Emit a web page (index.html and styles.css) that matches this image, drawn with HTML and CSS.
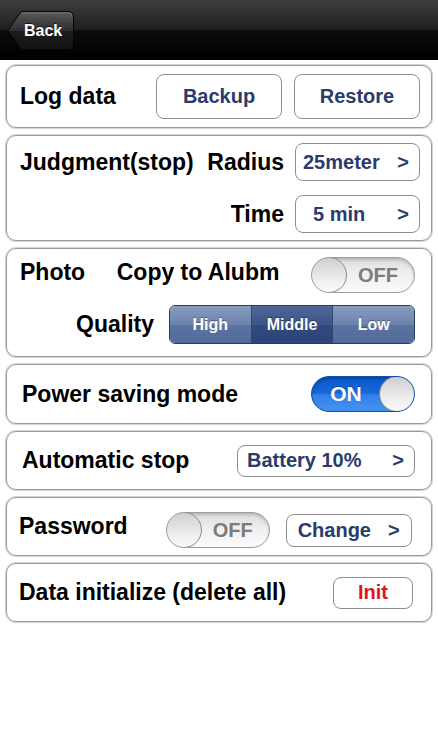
FILE: index.html
```html
<!DOCTYPE html>
<html lang="en">
<head>
  <meta charset="UTF-8">
  <meta name="viewport" content="width=device-width, initial-scale=1.0">
  <title>Settings</title>
  <link rel="stylesheet" href="styles.css">
</head>
<body>
  <header class="navbar">
    <button type="button" class="back-btn">
      <svg class="back-shape" viewBox="0 0 67 39" width="67" height="39">
        <defs>
          <linearGradient id="backFill" x1="0" y1="0" x2="0" y2="1">
            <stop offset="0" stop-color="#5a5a5a"/>
            <stop offset="0.5" stop-color="#2e2e2e"/>
            <stop offset="0.52" stop-color="#1c1c1c"/>
            <stop offset="1" stop-color="#141414"/>
          </linearGradient>
        </defs>
        <path d="M1 19.5 L13 2 Q14 0.5 16 0.5 L61 0.5 Q66.5 0.5 66.5 6 L66.5 33 Q66.5 38.5 61 38.5 L16 38.5 Q14 38.5 13 37 Z" fill="url(#backFill)" stroke="#050505" stroke-width="1"/>
        <path d="M14.5 2 L61 2 Q65 2 65 6" fill="none" stroke="rgba(255,255,255,0.18)" stroke-width="1"/>
      </svg>
      <span class="back-text">Back</span>
    </button>
  </header>

  <main class="settings">
    <!-- log data -->
    <section class="card card-log">
      <span class="label">Log data</span>
      <div class="btn-pair">
        <button type="button" class="btn btn-big">Backup</button>
        <button type="button" class="btn btn-big">Restore</button>
      </div>
    </section>

    <!-- judgment -->
    <section class="card card-judgment">
      <div class="row">
        <span class="label">Judgment(stop)</span>
        <span class="label label-push">Radius</span>
        <button type="button" class="btn btn-select"><span>25meter</span><span class="arrow">&gt;</span></button>
      </div>
      <div class="row row-end">
        <span class="label">Time</span>
        <button type="button" class="btn btn-select btn-time"><span>5 min</span><span class="arrow">&gt;</span></button>
      </div>
    </section>

    <!-- photo -->
    <section class="card card-photo">
      <div class="row row-spread">
        <span class="label">Photo</span>
        <span class="label">Copy to Alubm</span>
        <div class="switch switch-off"><span class="knob"></span><span class="switch-text">OFF</span></div>
      </div>
      <div class="row row-end">
        <span class="label">Quality</span>
        <div class="segmented">
          <span class="seg">High</span>
          <span class="seg seg-active">Middle</span>
          <span class="seg">Low</span>
        </div>
      </div>
    </section>

    <!-- power saving -->
    <section class="card card-power">
      <span class="label">Power saving mode</span>
      <div class="switch switch-on"><span class="switch-text">ON</span><span class="knob"></span></div>
    </section>

    <!-- automatic stop -->
    <section class="card card-auto">
      <span class="label">Automatic stop</span>
      <button type="button" class="btn btn-select btn-battery"><span>Battery 10%</span><span class="arrow">&gt;</span></button>
    </section>

    <!-- password -->
    <section class="card card-password">
      <span class="label">Password</span>
      <div class="switch switch-off"><span class="knob"></span><span class="switch-text">OFF</span></div>
      <button type="button" class="btn btn-select btn-change"><span>Change</span><span class="arrow">&gt;</span></button>
    </section>

    <!-- init -->
    <section class="card card-init">
      <span class="label">Data initialize (delete all)</span>
      <button type="button" class="btn btn-init">Init</button>
    </section>
  </main>
</body>
</html>
```

FILE: styles.css
```css
body {
  margin: 0;
  background-color: #fff;
  font-family: "Liberation Sans", Arial, Helvetica, sans-serif;
  font-weight: bold;
  color: #000;
}

button {
  font-family: inherit;
  font-weight: bold;
  margin: 0;
  cursor: pointer;
}

.navbar {
  height: 60px;
  box-sizing: border-box;
  padding: 11px 0 0 7px;
  background: linear-gradient(#3d3d3d 0%, #1e1e1e 50%, #0b0b0b 51%, #000 100%);
}

.back-btn {
  position: relative;
  width: 67px;
  height: 39px;
  padding: 0 0 0 17px;
  border: none;
  background: none;
  color: #fff;
  font-size: 16px;
  display: flex;
  align-items: center;
}

.back-shape {
  position: absolute;
  left: 0;
  top: 0;
}

.back-text {
  position: relative;
  text-shadow: 0 -1px 0 rgba(0, 0, 0, 0.6);
}

.settings {
  padding: 5px 6px;
  display: flex;
  flex-direction: column;
  gap: 7px;
}

.card {
  box-sizing: border-box;
  border: 1px solid #9a9a9a;
  box-shadow: 0 0 0 1px #d6d6d6;
  border-radius: 10px;
  padding: 0 11px 0 13px;
  display: flex;
  align-items: center;
  justify-content: space-between;
}

.label {
  font-size: 23px;
  white-space: nowrap;
}

.card-log {
  height: 63px;
}

.btn-pair {
  display: flex;
  gap: 12px;
}

.btn {
  box-sizing: border-box;
  background: #fff;
  border: 1px solid #8e8e8e;
  border-radius: 8px;
  color: #2a3b6c;
  font-size: 20px;
  padding: 0;
}

.btn-big {
  width: 126px;
  height: 45px;
}

.card-judgment {
  height: 106px;
  flex-direction: column;
  align-items: stretch;
  justify-content: flex-start;
  padding-top: 7px;
  padding-bottom: 7px;
  gap: 14px;
}

.row {
  display: flex;
  align-items: center;
}

.row-end {
  justify-content: flex-end;
  gap: 11px;
}

.row-spread {
  justify-content: space-between;
}

.label-push {
  margin-left: auto;
  margin-right: 11px;
}

.btn-select {
  width: 125px;
  height: 38px;
  display: flex;
  align-items: center;
  justify-content: space-between;
  padding: 0 10px 0 7px;
}

.btn-time {
  padding-left: 17px;
}

.arrow {
  font-size: 20px;
}

.card-photo {
  height: 109px;
  flex-direction: column;
  align-items: stretch;
  justify-content: flex-start;
  padding-top: 8px;
  padding-right: 16px;
  gap: 12px;
}

.card-photo .row-spread .label {
  margin-bottom: 6px;
}

.card-photo .row-end {
  gap: 15px;
}

.switch {
  box-sizing: border-box;
  width: 104px;
  height: 36px;
  border-radius: 18px;
  border: 1px solid #9c9c9c;
  display: flex;
  align-items: center;
  overflow: hidden;
}

.switch-off {
  background: linear-gradient(#dcdcdc, #efefef 45%, #fbfbfb);
  box-shadow: inset 0 2px 3px rgba(0, 0, 0, 0.18);
}

.switch-on {
  border-color: #0d4fa8;
  background: linear-gradient(#0a58cc 0%, #1868d8 48%, #2f80ea 52%, #4593f2 100%);
  box-shadow: inset 0 2px 3px rgba(0, 0, 0, 0.25);
}

.knob {
  box-sizing: border-box;
  flex: none;
  width: 36px;
  height: 36px;
  margin: -1px;
  border-radius: 50%;
  border: 1px solid #8a8a8a;
  background: linear-gradient(#cfcfcf, #ececec 60%, #fafafa);
}

.switch-text {
  flex: 1;
  text-align: center;
  font-size: 20px;
}

.switch-off .switch-text {
  color: #7c7c7c;
  padding-right: 4px;
}

.switch-on .switch-text {
  color: #fff;
  font-size: 21px;
  text-shadow: 0 -1px 0 rgba(0, 0, 0, 0.3);
}

.segmented {
  box-sizing: border-box;
  width: 246px;
  height: 39px;
  display: flex;
  border: 1px solid #2b3b5c;
  border-radius: 6px;
  overflow: hidden;
}

.seg {
  flex: 1;
  display: flex;
  align-items: center;
  justify-content: center;
  color: #fff;
  font-size: 16px;
  text-shadow: 0 -1px 0 rgba(0, 0, 0, 0.35);
  background: linear-gradient(#899dc0 0%, #6c83ad 50%, #5c74a2 51%, #516a9b 100%);
  border-left: 1px solid #34476d;
}

.seg:first-child {
  border-left: none;
}

.seg-active {
  background: linear-gradient(#50679a 0%, #3c5386 50%, #31497c 51%, #2c4477 100%);
}

.card-power {
  height: 60px;
  padding-left: 15px;
  padding-right: 16px;
}

.card-auto {
  height: 59px;
  padding-left: 15px;
  padding-right: 16px;
}

.btn-battery {
  width: 178px;
  height: 32px;
  padding-left: 9px;
}

.card-password {
  height: 59px;
  padding-left: 12px;
  padding-right: 18px;
  justify-content: flex-start;
}

.card-password .switch {
  margin-left: 38px;
  margin-top: 7px;
}

.btn-change {
  width: 126px;
  height: 33px;
  margin-left: 16px;
  margin-top: 7px;
  padding-left: 11px;
  padding-right: 11px;
}

.card-init {
  height: 59px;
  padding-left: 12px;
  padding-right: 18px;
}

.btn-init {
  width: 80px;
  height: 32px;
  color: #de1420;
}
```
